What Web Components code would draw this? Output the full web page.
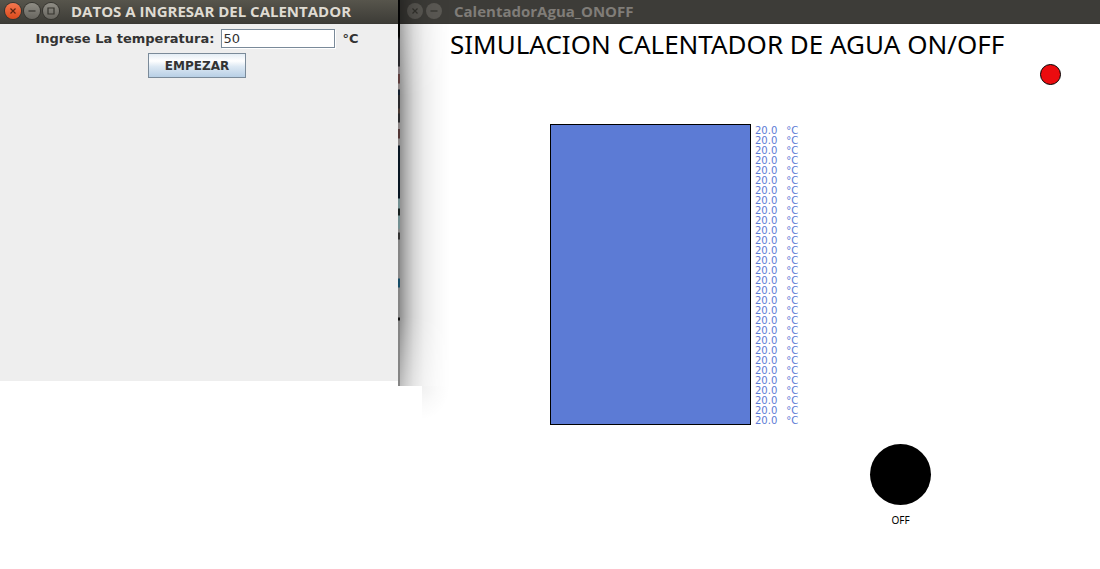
<!DOCTYPE html>
<html lang="es">
<head>
<meta charset="utf-8">
<meta name="viewport" content="width=device-width">
<title>CalentadorAgua_ONOFF</title>
<style>
  html, body { margin: 0; background: #fff; }
</style>
</head>
<body>
<heater-desktop>
  <app-window slot="dialog" heading="DATOS A INGRESAR DEL CALENTADOR" maximizable>
    <heater-form></heater-form>
  </app-window>
  <app-window slot="main" heading="CalentadorAgua_ONOFF" inactive>
    <heater-simulation></heater-simulation>
  </app-window>
</heater-desktop>
<script>
class Base extends HTMLElement {
  connectedCallback() {
    if (this.shadowRoot) return;
    this.attachShadow({ mode: 'open' }).innerHTML = this.render();
  }
}

customElements.define('heater-desktop', class extends Base {
  render() {
    return `<style>
      :host { display: grid; grid-template-columns: minmax(0, 4fr) minmax(0, 7fr); align-items: start; min-height: 100vh; background: #fff; }
      .left { display: flex; position: relative; }
      .left ::slotted(*) { flex: 1; min-width: 0; min-height: 381px; background: #eee; }
      /* sliver of the windows lying behind */
      .sliver { width: 2px; margin-bottom: -5px; background: linear-gradient(#030303 0 36px, #26262a 40px 66px, #80777b 67px 74px, #5c3c3c 74px 83px, #8c8584 84px 89px, #14202f 90px 95px, #29292c 95px 108px, #4a3a34 109px 113px, #29292c 114px 122px, #8a8484 123px 129px, #513636 129px 138px, #898585 139px 145px, #071522 146px 198px, #739092 199px 208px, #16201f 209px 215px, #739092 216px 228px, #888 230px 232px, #333 233px 239px, #858585 240px 278px, #174c66 279px 287px, #858585 288px 317px, #111 318px 320px, #858585 321px); }
      .right { position: relative; min-width: 0; }
      .shade, .tail { position: absolute; pointer-events: none; }
      .shade { left: 0; top: 0; width: 50px; height: 386px;
        background: linear-gradient(90deg, rgba(0,0,0,.43), rgba(0,0,0,.3) 12%, rgba(0,0,0,.17) 28%, rgba(0,0,0,.08) 48%, rgba(0,0,0,.03) 70%, transparent);
        -webkit-mask: linear-gradient(rgba(0,0,0,.75), #000 25% 82%, rgba(0,0,0,.6));
        mask: linear-gradient(rgba(0,0,0,.75), #000 25% 82%, rgba(0,0,0,.6)); }
      .tail { left: 22px; top: 386px; width: 28px; height: 34px; background: radial-gradient(farthest-side at 0 0, rgba(0,0,0,.06), rgba(0,0,0,.02) 55%, transparent); }
    </style>
    <div class="left"><slot name="dialog"></slot><div class="sliver"></div></div>
    <div class="right"><slot name="main"></slot><div class="shade"></div><div class="tail"></div></div>`;
  }
});

customElements.define('app-window', class extends Base {
  render() {
    const btn = (cls, label, path) => `<button class="${cls}" type="button" aria-label="${label}"><svg viewBox="0 0 16 16" width="16" height="16"><path d="${path}"/></svg></button>`;
    return `<style>
      :host { display: block; }
      header { display: flex; align-items: center; gap: 3px; height: 24px; padding: 0 5px 2px; box-sizing: border-box; background: linear-gradient(#57554c, #3d3c37); border-bottom: 1px solid #3a3935; overflow: hidden; }
      :host([inactive]) header { background: #3d3c38; padding-left: 7px; }
      h1 { margin: 0 0 0 9px; font: bold 15px/22px "Open Sans", "Noto Sans", sans-serif; color: #dfdbd2; white-space: nowrap; }
      :host([inactive]) h1 { color: #807d78; }
      button { display: block; width: 16px; height: 16px; padding: 0; border: 0; border-radius: 50%; background: linear-gradient(#8f8d85, #67655f); box-shadow: 0 0 0 1px #35342f; }
      button.close { background: linear-gradient(#f4774f, #dc4a1c); }
      :host([inactive]) button { background: #5b5954; box-shadow: none; }
      svg { display: block; fill: none; stroke: #36352f; stroke-width: 1.2; }
      .close svg { stroke: #5c2411; }
      :host([inactive]) svg { stroke: #35342f; }
    </style>
    <header>
      ${btn('close', 'Cerrar', 'M5.5 5.5l5 5M10.5 5.5l-5 5')}
      ${btn('min', 'Minimizar', 'M4.5 8h7')}
      ${this.hasAttribute('maximizable') ? btn('max', 'Maximizar', 'M5 5h6v6H5z') : ''}
      <h1>${this.getAttribute('heading')}</h1>
    </header>
    <slot></slot>`;
  }
});

customElements.define('heater-form', class extends Base {
  render() {
    return `<style>
      :host { display: block; font: bold 13px/18px "DejaVu Sans", sans-serif; color: #333; }
      form { display: flex; flex-direction: column; align-items: center; gap: 5px; padding: 5px 4px 0 0; }
      .row { display: flex; align-items: center; gap: 7px; }
      input { box-sizing: border-box; width: 114px; height: 19px; margin: 0; padding: 0 1px; border: 1px solid #7a8a99; border-radius: 0; background: #fff; box-shadow: 1px 1px #fff; font: 13px/17px "DejaVu Sans", sans-serif; color: #333; outline: 0; }
      button { box-sizing: border-box; height: 25px; padding: 0 16px; border: 1px solid #7a8a99; border-radius: 0; background: linear-gradient(#e4edf5, #fff 30%, #dce8f3 55%, #b8cfe5); font: inherit; font-size: 12px; color: #333; }
    </style>
    <form onsubmit="return false">
      <div class="row"><label for="t">Ingrese La temperatura:</label><input id="t" type="text" value="50"><span>°C</span></div>
      <button type="submit">EMPEZAR</button>
    </form>`;
  }
});

customElements.define('heater-simulation', class extends Base {
  render() {
    const row = '<li><span>20.0</span><span>°C</span></li>';
    return `<style>
      :host { display: flex; flex-direction: column; font-family: "Noto Sans", sans-serif; color: #000; }
      h2 { margin: 0 0 0 50px; font-size: 26px; font-weight: 400; line-height: 40px; white-space: nowrap; }
      .lamp { align-self: flex-end; box-sizing: border-box; width: 21px; height: 21px; margin-right: 39px; border: 1px solid #000; border-radius: 50%; background: #eb0c0f; }
      .vessel { display: flex; gap: 4px; height: 301px; margin: 39px 0 19px 150px; }
      .tank { box-sizing: border-box; width: 201px; border: 1px solid #000; background: #5c7bd5; }
      ul { list-style: none; margin: 0; padding: 2px 0 0; font: 10px/10px "DejaVu Sans", sans-serif; color: #5c7bd5; }
      li { display: flex; gap: 9px; height: 10px; }
      .heater { align-self: flex-end; display: flex; flex-direction: column; align-items: center; gap: 8px; margin-right: 169px; font-size: 10px; line-height: 14px; }
      .heater i { display: block; width: 61px; height: 61px; border-radius: 50%; background: #000; }
    </style>
    <h2>SIMULACION CALENTADOR DE AGUA ON/OFF</h2>
    <div class="lamp"></div>
    <div class="vessel"><div class="tank"></div><ul>${row.repeat(30)}</ul></div>
    <div class="heater"><i></i><span>OFF</span></div>`;
  }
});
</script>
</body>
</html>
